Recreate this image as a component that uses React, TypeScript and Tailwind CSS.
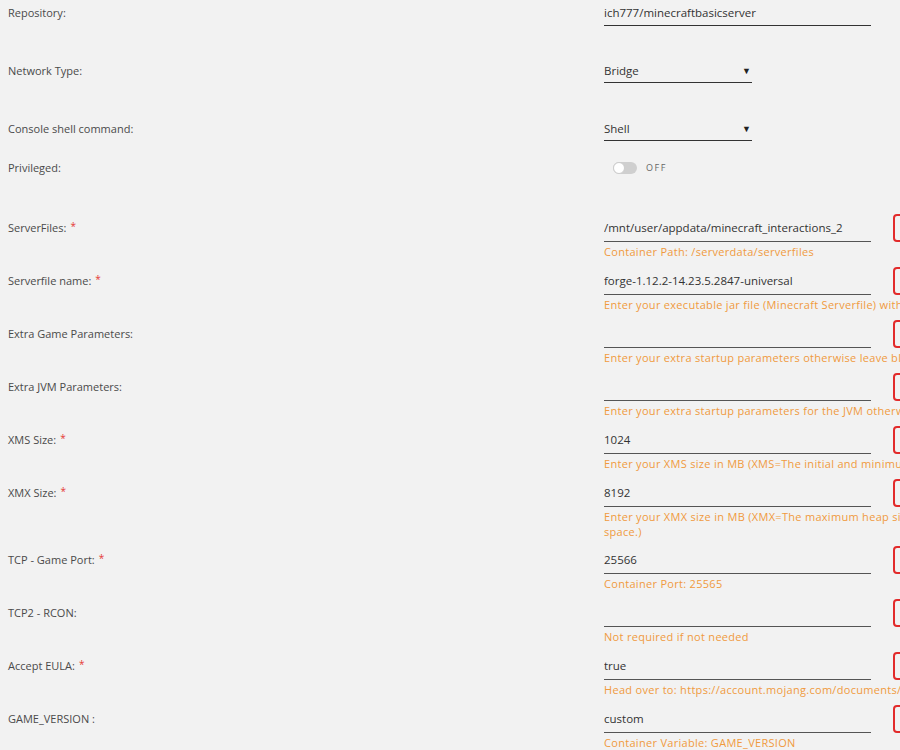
import React from "react";

type Cfg = {
  label: string;
  req?: boolean;
  value: string;
  desc: string[];
  tall?: boolean;
};

const cfgs: Cfg[] = [
  { label: "ServerFiles:", req: true, value: "/mnt/user/appdata/minecraft_interactions_2", desc: ["Container Path: /serverdata/serverfiles"] },
  { label: "Serverfile name:", req: true, value: "forge-1.12.2-14.23.5.2847-universal", desc: ["Enter your executable jar file (Minecraft Serverfile) without the .jar extension"] },
  { label: "Extra Game Parameters:", value: "", desc: ["Enter your extra startup parameters otherwise leave blank"] },
  { label: "Extra JVM Parameters:", value: "", desc: ["Enter your extra startup parameters for the JVM otherwise leave blank"] },
  { label: "XMS Size:", req: true, value: "1024", desc: ["Enter your XMS size in MB (XMS=The initial and minimum heap size)"] },
  { label: "XMX Size:", req: true, value: "8192", desc: ["Enter your XMX size in MB (XMX=The maximum heap size. The JVM will not be allowed to use more than this amount of heap", "space.)"], tall: true },
  { label: "TCP - Game Port:", req: true, value: "25566", desc: ["Container Port: 25565"] },
  { label: "TCP2 - RCON:", value: "", desc: ["Not required if not needed"] },
  { label: "Accept EULA:", req: true, value: "true", desc: ["Head over to: https://account.mojang.com/documents/minecraft_eula"] },
  { label: "GAME_VERSION :", value: "custom", desc: ["Container Variable: GAME_VERSION"] },
];

function Label({ text, req }: { text: string; req?: boolean }) {
  return (
    <div className="w-[604px] shrink-0 pl-[8px] text-[11px] text-[#4a4a4a] leading-[20px]">
      {text}
      {req && <span className="text-[#e53935] ml-[4px] text-[10px] relative top-[-2px]">*</span>}
    </div>
  );
}

function ConfigRow({ c }: { c: Cfg }) {
  return (
    <div className={`flex ${c.tall ? "h-[67px]" : "h-[53px]"}`}>
      <div className="mt-[4px]">
        <Label text={c.label} req={c.req} />
      </div>
      <div className="flex flex-col min-w-0">
        <div className="flex">
          <div className="mt-[4px] h-[24px] w-[267px] shrink-0 leading-[20px] text-[11.5px] text-[#333] border-b border-[#555] whitespace-nowrap overflow-hidden">
            {c.value}
          </div>
          <div className="ml-[22px] w-[30px] h-[28px] shrink-0 border-2 border-[#e22b2b] rounded-[4px]" />
        </div>
        <div className="mt-[2px] text-[11px] tracking-[0.3px] leading-[15px] text-[#f09a3e] whitespace-nowrap">
          {c.desc.map((d, i) => (
            <div key={i}>{d}</div>
          ))}
        </div>
      </div>
    </div>
  );
}

function SelectRow({ label, value, h }: { label: string; value: string; h: string }) {
  return (
    <div className={`flex ${h}`}>
      <div className="mt-[3px]">
        <Label text={label} />
      </div>
      <div className="mt-[2px] h-[23px] w-[148px] flex items-center justify-between border-b border-[#333] text-[11.5px] text-[#333] leading-[20px]">
        <span>{value}</span>
        <span className="text-[9px] text-[#222] mr-[1px]">▼</span>
      </div>
    </div>
  );
}

export default function App() {
  return (
    <div
      className="w-[900px] h-[750px] overflow-hidden bg-[#f2f2f2]"
      style={{ fontFamily: '"Open Sans", "Noto Sans", sans-serif' }}
    >
      <div className="flex h-[58px]">
        <div className="mt-[3px]">
          <Label text="Repository:" />
        </div>
        <div className="mt-[3px] h-[23px] w-[267px] leading-[20px] text-[11.5px] text-[#333] border-b border-[#333]">
          ich777/minecraftbasicserver
        </div>
      </div>
      <SelectRow label="Network Type:" value="Bridge" h="h-[58px]" />
      <SelectRow label="Console shell command:" value="Shell" h="h-[39px]" />
      <div className="flex h-[59px]">
        <div className="mt-[3px]">
          <Label text="Privileged:" />
        </div>
        <div className="mt-[7px] ml-[9px] h-[12px] flex items-center">
          <div className="w-[24px] h-[12px] rounded-full bg-[#cfcfcf] relative">
            <div className="absolute left-0 top-0 w-[12px] h-[12px] rounded-full bg-white border border-[#ccc]" />
          </div>
          <span className="ml-[9px] text-[9px] tracking-[1.5px] text-[#666] leading-[12px]">OFF</span>
        </div>
      </div>
      {cfgs.map((c) => (
        <ConfigRow key={c.label} c={c} />
      ))}
    </div>
  );
}
